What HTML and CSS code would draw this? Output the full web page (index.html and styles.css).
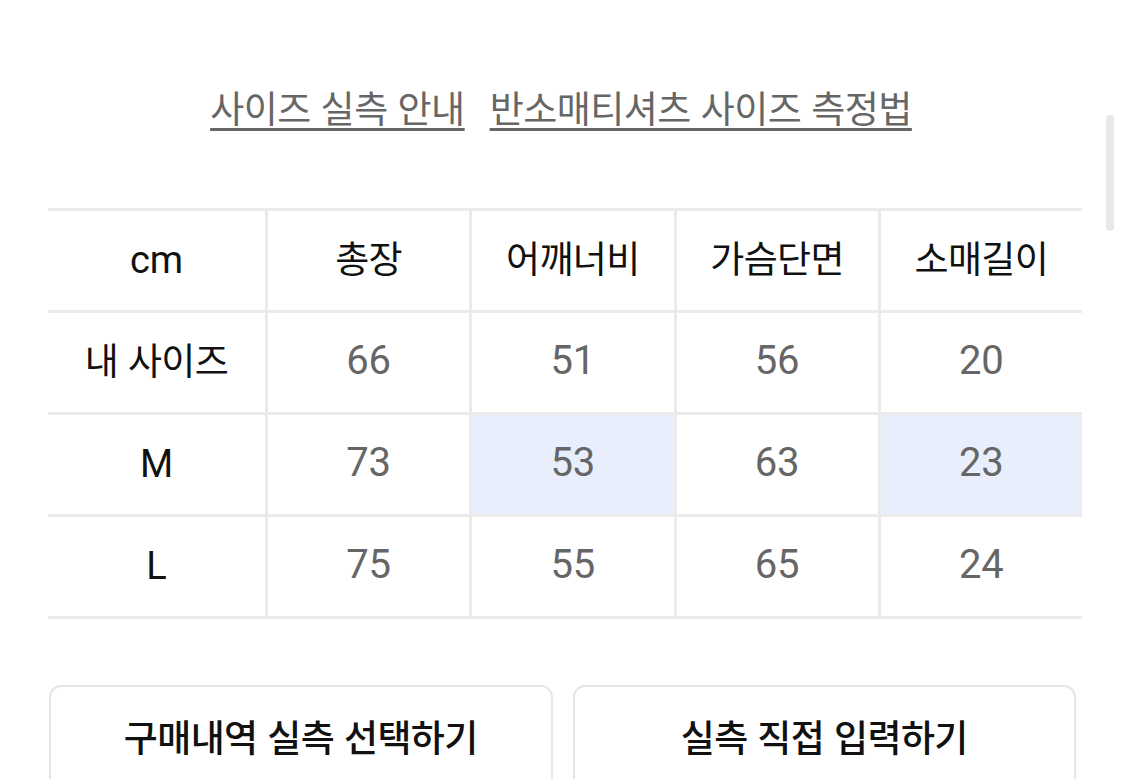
FILE: index.html
```html
<!DOCTYPE html>
<html lang="ko">
<head>
<meta charset="utf-8">
<link rel="stylesheet" href="styles.css">
</head>
<body>
<div class="page">
  <div class="links">
    <a class="link">사이즈 실측 안내</a>
    <a class="link">반소매티셔츠 사이즈 측정법</a>
  </div>
  <div class="table">
    <div class="cell head latin first">cm</div>
    <div class="cell head">총장</div>
    <div class="cell head">어깨너비</div>
    <div class="cell head">가슴단면</div>
    <div class="cell head">소매길이</div>

    <div class="cell head first">내 사이즈</div>
    <div class="cell val">66</div>
    <div class="cell val">51</div>
    <div class="cell val">56</div>
    <div class="cell val">20</div>

    <div class="cell head latin first">M</div>
    <div class="cell val">73</div>
    <div class="cell val hl">53</div>
    <div class="cell val">63</div>
    <div class="cell val hl">23</div>

    <div class="cell head latin first">L</div>
    <div class="cell val">75</div>
    <div class="cell val">55</div>
    <div class="cell val">65</div>
    <div class="cell val">24</div>
  </div>
  <div class="buttons">
    <button class="btn">구매내역 실측 선택하기</button>
    <button class="btn">실측 직접 입력하기</button>
  </div>
</div>
<div class="scrollbar"></div>
</body>
</html>
```
FILE: styles.css
```css
html, body {
  margin: 0;
  padding: 0;
  background: #fff;
  overflow: hidden;
  height: 779px;
}
body {
  font-family: "Noto Sans CJK KR", sans-serif;
  color: #111;
}
.page {
  padding: 84px 49px 0 48px;
}
.links {
  display: flex;
  justify-content: center;
  gap: 25px;
  font-family: "Noto Sans CJK KR", sans-serif;
  font-size: 37px;
  line-height: 46px;
  letter-spacing: -0.5px;
  color: #666;
  margin-right: 2px;
}
.link {
  text-decoration: underline;
  text-decoration-thickness: 3px;
  text-underline-offset: 5px;
  text-decoration-color: #666;
}
.table {
  margin-top: 78px;
  width: 1034px;
  display: grid;
  grid-template-columns: 217px repeat(4, 1fr);
  border-top: 3px solid #ebebeb;
}
.cell {
  box-sizing: border-box;
  height: 102px;
  padding-bottom: 8px;
  border-bottom: 3px solid #ebebeb;
  border-left: 3px solid #ebebeb;
  display: flex;
  align-items: center;
  justify-content: center;
}
.cell.first {
  border-left: none;
}
.head {
  color: #111;
  font-family: "Noto Sans CJK KR", sans-serif;
  font-size: 37px;
  font-weight: 400;
  letter-spacing: -0.6px;
}
.head.latin {
  font-family: Roboto, "Liberation Sans", sans-serif;
  font-size: 38px;
  letter-spacing: 0;
  padding-bottom: 2px;
}
.val {
  color: #666;
  font-family: Roboto, "Liberation Sans", sans-serif;
  font-size: 40px;
  padding-bottom: 4px;
}
.hl {
  background: #e8eefc;
}
.buttons {
  margin-top: 66px;
  display: flex;
  gap: 20px;
  padding-left: 1px;
}
.btn {
  flex: 1;
  height: 120px;
  background: #fff;
  border: 2px solid #e6e6e6;
  border-radius: 12px;
  padding: 26px 0 0;
  display: flex;
  justify-content: center;
  align-items: flex-start;
  font-family: "Noto Sans CJK KR", sans-serif;
  font-size: 37px;
  line-height: 46px;
  font-weight: 500;
  color: #111;
  letter-spacing: -0.6px;
}
.scrollbar {
  position: absolute;
  top: 115px;
  right: 11px;
  width: 8px;
  height: 116px;
  border-radius: 4px;
  background: #e8e8e8;
}
```
